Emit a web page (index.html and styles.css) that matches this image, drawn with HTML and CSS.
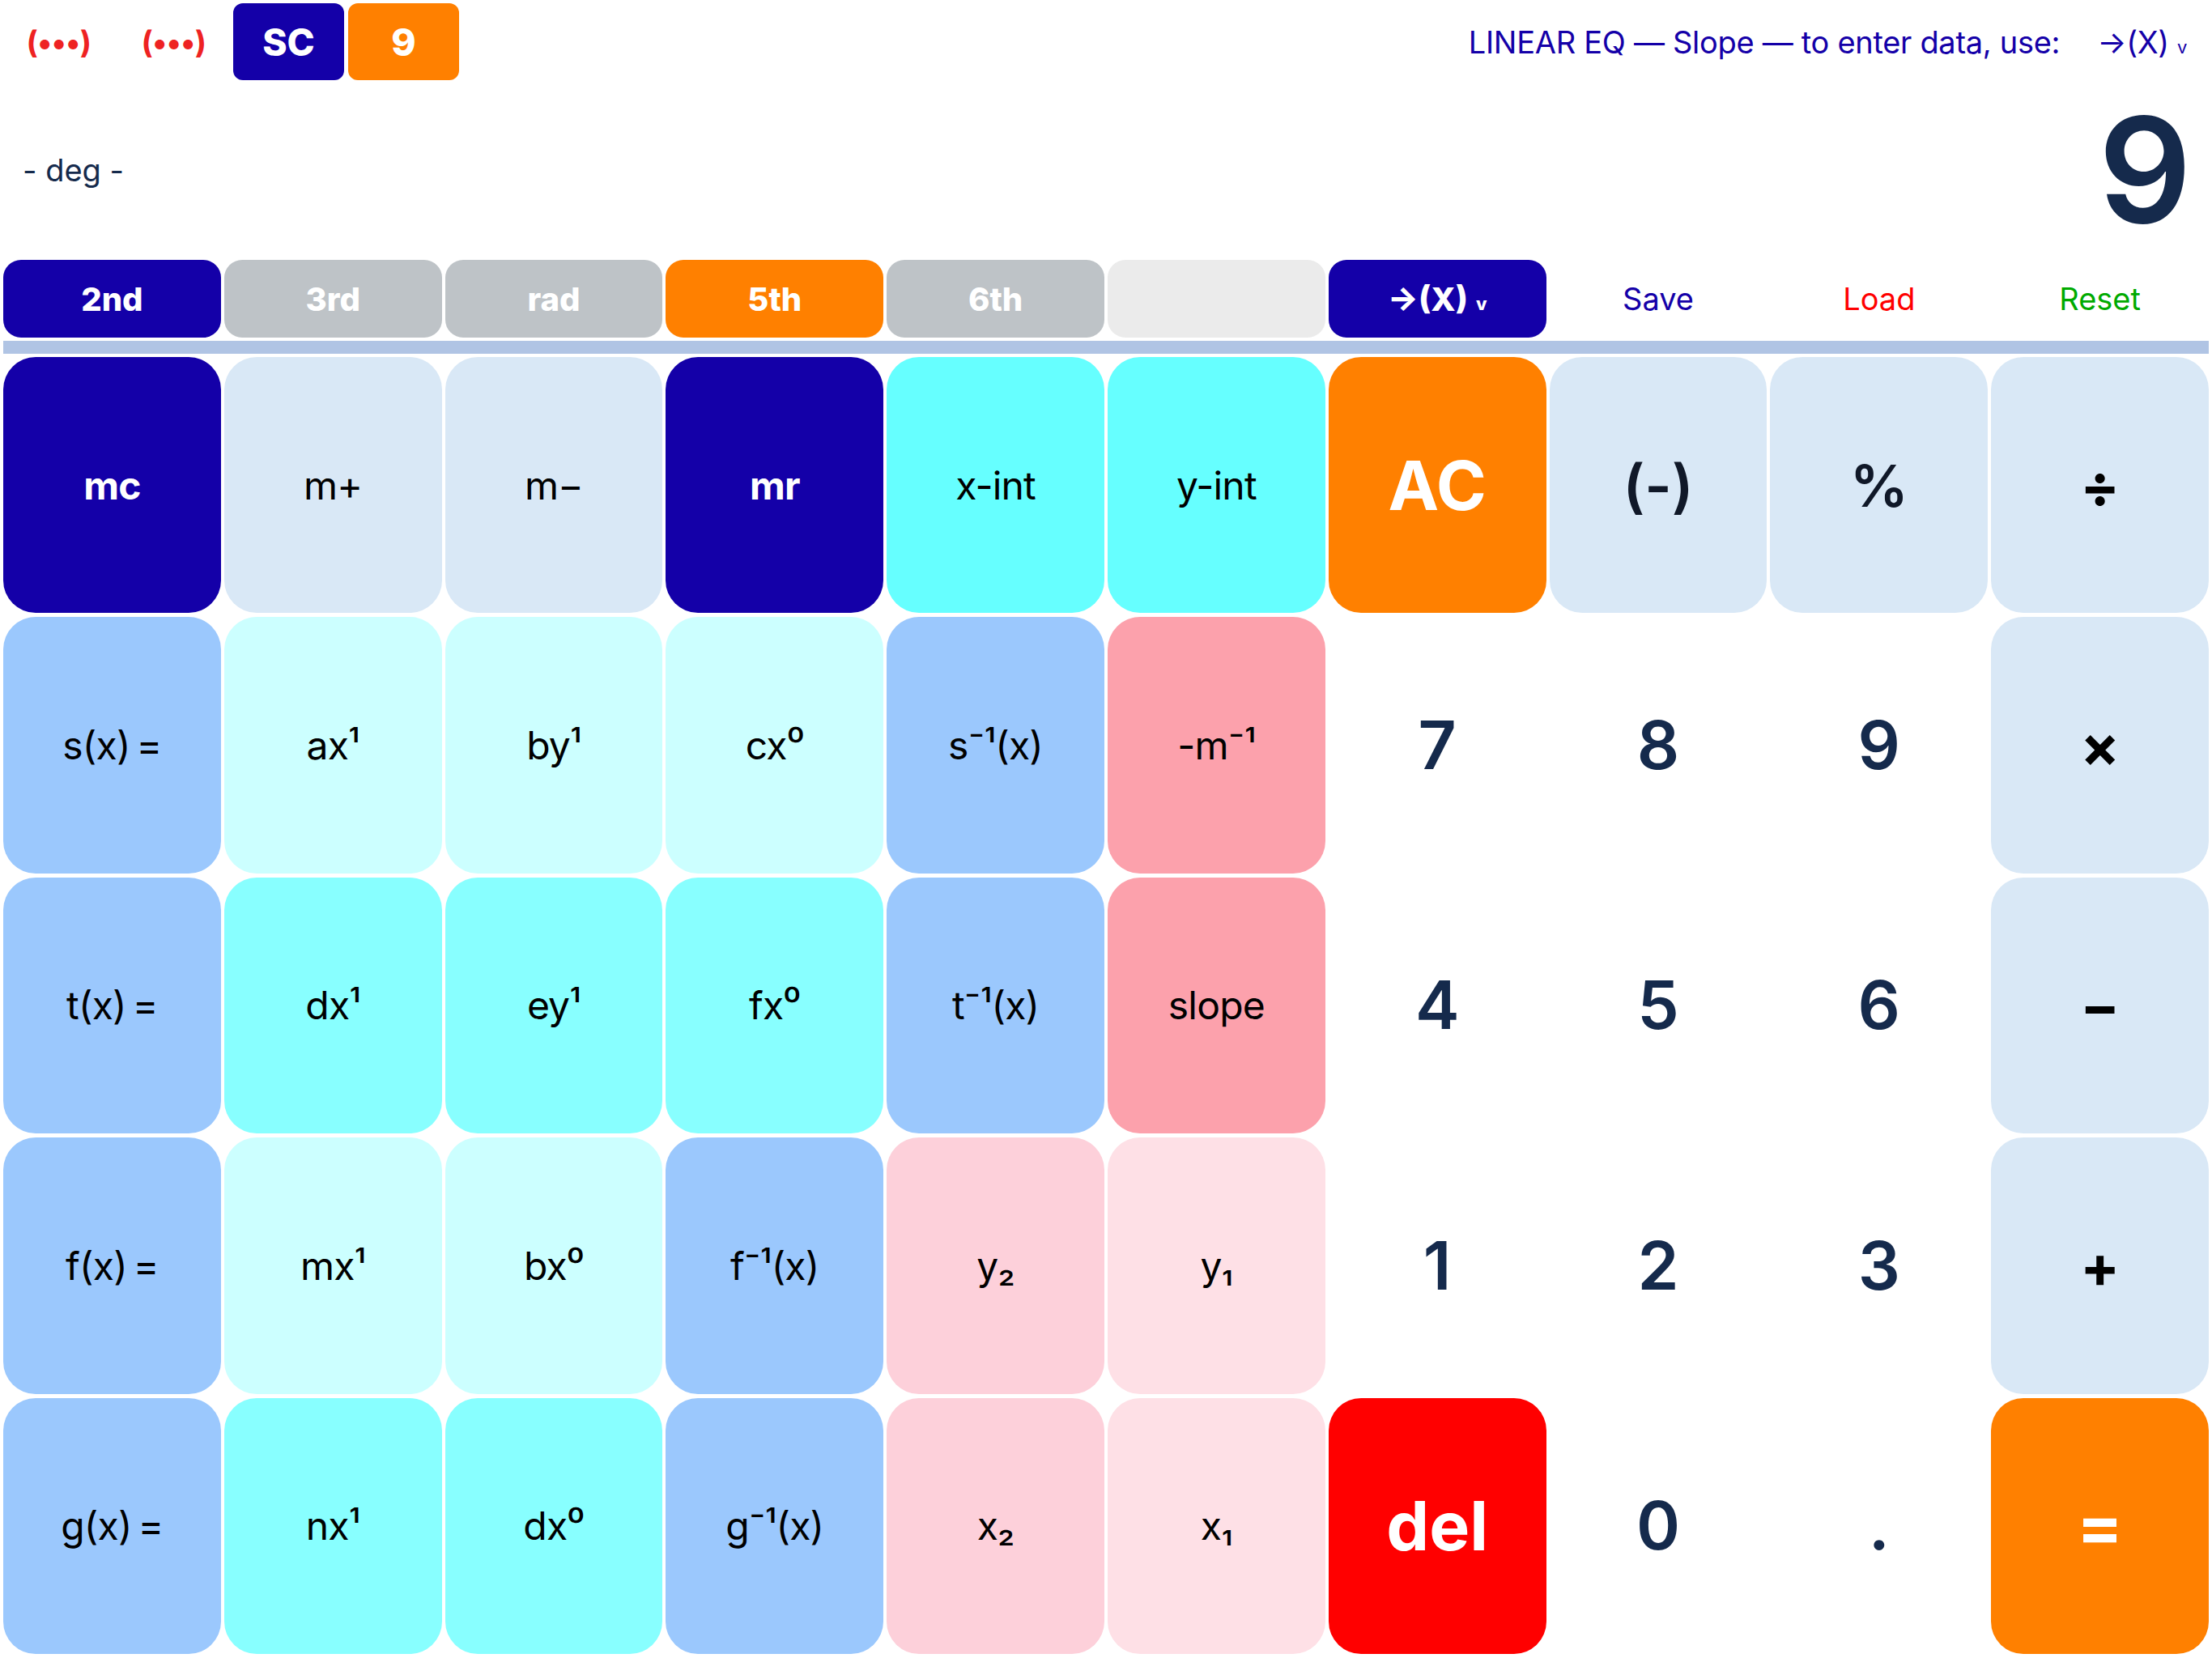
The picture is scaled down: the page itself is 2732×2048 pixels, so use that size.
FILE: index.html
```html
<!DOCTYPE html>
<html lang="en">
<head>
<meta charset="utf-8">
<title>Linear EQ Calculator</title>
<link rel="stylesheet" href="styles.css">
</head>
<body>
<div class="app">
  <header class="topbar">
    <div class="cell paren">(•••)</div>
    <div class="cell paren">(•••)</div>
    <div class="cell badge navy">SC</div>
    <div class="cell badge orange">9</div>
    <div class="title">LINEAR EQ — Slope — to enter data, use:<span class="title-gap"></span>→(X)<span class="small-v">v</span></div>
  </header>
  <section class="display">
    <div class="mode">- deg -</div>
    <div class="value">9</div>
  </section>
  <nav class="tabs">
    <div class="tab navy">2nd</div>
    <div class="tab gray">3rd</div>
    <div class="tab gray">rad</div>
    <div class="tab orange">5th</div>
    <div class="tab gray">6th</div>
    <div class="tab blank"></div>
    <div class="tab navy">→(X)<span class="small-v">v</span></div>
    <div class="link save">Save</div>
    <div class="link load">Load</div>
    <div class="link reset">Reset</div>
  </nav>
  <div class="bar"></div>
  <main class="keys">
    <div class="key navy bold">mc</div>
    <div class="key pale">m+</div>
    <div class="key pale">m−</div>
    <div class="key navy bold">mr</div>
    <div class="key cyan">x-int</div>
    <div class="key cyan">y-int</div>
    <div class="key orange big">AC</div>
    <div class="key pale op dark">(-)</div>
    <div class="key pale op dark">%</div>
    <div class="key pale op">÷</div>

    <div class="key blue">s(x)&#8201;=</div>
    <div class="key ice">ax¹</div>
    <div class="key ice">by¹</div>
    <div class="key ice">cx⁰</div>
    <div class="key blue">s⁻¹(x)</div>
    <div class="key rose">-m⁻¹</div>
    <div class="key digit">7</div>
    <div class="key digit">8</div>
    <div class="key digit">9</div>
    <div class="key pale op">×</div>

    <div class="key blue">t(x)&#8201;=</div>
    <div class="key aqua">dx¹</div>
    <div class="key aqua">ey¹</div>
    <div class="key aqua">fx⁰</div>
    <div class="key blue">t⁻¹(x)</div>
    <div class="key rose">slope</div>
    <div class="key digit">4</div>
    <div class="key digit">5</div>
    <div class="key digit">6</div>
    <div class="key pale op">−</div>

    <div class="key blue">f(x)&#8201;=</div>
    <div class="key ice">mx¹</div>
    <div class="key ice">bx⁰</div>
    <div class="key blue">f⁻¹(x)</div>
    <div class="key blush">y₂</div>
    <div class="key petal">y₁</div>
    <div class="key digit">1</div>
    <div class="key digit">2</div>
    <div class="key digit">3</div>
    <div class="key pale op">+</div>

    <div class="key blue">g(x)&#8201;=</div>
    <div class="key aqua">nx¹</div>
    <div class="key aqua">dx⁰</div>
    <div class="key blue">g⁻¹(x)</div>
    <div class="key blush">x₂</div>
    <div class="key petal">x₁</div>
    <div class="key red big">del</div>
    <div class="key digit">0</div>
    <div class="key digit">.</div>
    <div class="key orange big">=</div>
  </main>
</div>
</body>
</html>
```
FILE: styles.css
```css
* { box-sizing: border-box; }
html, body {
  margin: 0;
  padding: 0;
  background: #ffffff;
}
body {
  width: 2732px;
  height: 2048px;
  overflow: hidden;
  font-family: Inter, "Noto Sans", "DejaVu Sans", sans-serif;
  color: #000;
}
.app {
  padding: 4px 4px 5px 4px;
  display: flex;
  flex-direction: column;
  height: 2048px;
}

/* top bar */
.topbar {
  height: 95px;
  display: flex;
  align-items: stretch;
  gap: 5px;
}
.cell {
  width: 137px;
  display: flex;
  align-items: center;
  justify-content: center;
}
.paren {
  color: #ee2222;
  font-size: 38px;
  font-weight: 700;
  letter-spacing: -0.5px;
}
.badge {
  border-radius: 12px;
  color: #fff;
  font-size: 46px;
  font-weight: 800;
}
.title {
  margin-left: auto;
  padding-right: 27px;
  display: flex;
  align-items: center;
  color: #1400a8;
  font-size: 38px;
  font-weight: 400;
  letter-spacing: -0.3px;
  white-space: pre;
}
.title-gap { display: inline-block; width: 46px; }
.small-v {
  font-size: 22px;
  margin-left: 10px;
  align-self: center;
  position: relative;
  top: 6px;
}

/* display */
.display {
  height: 222px;
  display: flex;
  align-items: center;
  justify-content: space-between;
  padding: 0 21px 0 24px;
  color: #152a4c;
}
.mode {
  font-size: 38px;
}
.value {
  font-size: 180px;
  font-weight: 600;
  line-height: 1;
}

/* tabs */
.tabs {
  height: 96px;
  display: grid;
  grid-template-columns: repeat(10, 1fr);
  gap: 4px;
}
.tab {
  border-radius: 22px;
  display: flex;
  align-items: center;
  justify-content: center;
  color: #fff;
  font-size: 40px;
  font-weight: 800;
}
.tab.gray { background: #bec3c7; }
.tab.blank { background: #ebebeb; }
.link {
  display: flex;
  align-items: center;
  justify-content: center;
  font-size: 38px;
}
.save { color: #1400a8; }
.load { color: #ff0000; }
.reset { color: #00aa00; }

.bar {
  margin-top: 4px;
  height: 16px;
  background: #b0c4e4;
}

/* keys */
.keys {
  margin-top: 4px;
  flex: 1;
  display: grid;
  grid-template-columns: repeat(10, 1fr);
  grid-template-rows: repeat(5, 1fr);
  gap: 5px 4px;
}
.key {
  border-radius: 40px;
  display: flex;
  align-items: center;
  justify-content: center;
  font-size: 48px;
  letter-spacing: -0.8px;
  color: #000;
}
.navy { background: #1400a8; color: #fff; }
.orange { background: #ff8000; color: #fff; }
.red { background: #ff0000; color: #fff; }
.pale { background: #d9e8f6; }
.cyan { background: #66ffff; }
.blue { background: #9bc8fd; }
.ice { background: #ccffff; }
.aqua { background: #88ffff; }
.rose { background: #fca1ac; }
.blush { background: #fdd0da; }
.petal { background: #fee0e6; }

.bold { font-weight: 700; }
.big { font-size: 84px; font-weight: 700; letter-spacing: 0; }
.op { font-size: 72px; font-weight: 700; letter-spacing: 0; }
.op.dark { color: #101828; font-weight: 600; }
.digit {
  background: transparent;
  color: #152a4c;
  font-size: 82px;
  font-weight: 600;
  letter-spacing: 0;
}
```
